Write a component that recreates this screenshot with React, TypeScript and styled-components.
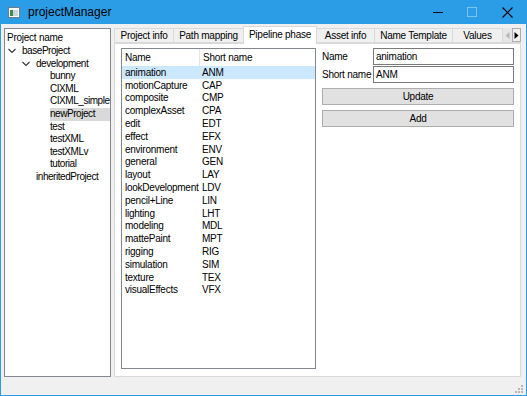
import styled, { createGlobalStyle } from "styled-components";

const phases: [string, string][] = [
  ["animation", "ANM"],
  ["motionCapture", "CAP"],
  ["composite", "CMP"],
  ["complexAsset", "CPA"],
  ["edit", "EDT"],
  ["effect", "EFX"],
  ["environment", "ENV"],
  ["general", "GEN"],
  ["layout", "LAY"],
  ["lookDevelopment", "LDV"],
  ["pencil+Line", "LIN"],
  ["lighting", "LHT"],
  ["modeling", "MDL"],
  ["mattePaint", "MPT"],
  ["rigging", "RIG"],
  ["simulation", "SIM"],
  ["texture", "TEX"],
  ["visualEffects", "VFX"],
];

const tree: { label: string; depth: number; open?: boolean; selected?: boolean }[] = [
  { label: "baseProject", depth: 0, open: true },
  { label: "development", depth: 1, open: true },
  { label: "bunny", depth: 2 },
  { label: "CIXML", depth: 2 },
  { label: "CIXML_simple", depth: 2 },
  { label: "newProject", depth: 2, selected: true },
  { label: "test", depth: 2 },
  { label: "testXML", depth: 2 },
  { label: "testXMLv", depth: 2 },
  { label: "tutorial", depth: 2 },
  { label: "inheritedProject", depth: 1 },
];

const tabs: { label: string; width: number }[] = [
  { label: "Project info", width: 60 },
  { label: "Path mapping", width: 71 },
  { label: "Pipeline phase", width: 74 },
  { label: "Asset info", width: 59 },
  { label: "Name Template", width: 79 },
  { label: "Values", width: 51 },
];

export default function App() {
  return (
    <>
      <GlobalStyle />
      <Window>
        <TitleBar>
          <AppIcon>
            <svg width="12" height="11" viewBox="0 0 12 11">
              <rect x="0.5" y="0.5" width="11" height="10" fill="#fff" stroke="#6f7b86" />
              <rect x="2" y="3" width="3" height="6" fill="#3b8a4a" />
              <rect x="5" y="3" width="5" height="6" fill="#c9d4dc" />
            </svg>
          </AppIcon>
          <Title>projectManager</Title>
          <Caption>
            <svg width="10" height="10" viewBox="0 0 10 10">
              <line x1="0" y1="5.5" x2="10" y2="5.5" stroke="#000" strokeWidth="1" />
            </svg>
          </Caption>
          <Caption>
            <svg width="10" height="10" viewBox="0 0 10 10">
              <rect x="0.5" y="0.5" width="9" height="9" fill="none" stroke="#7fc3ef" strokeWidth="1" />
            </svg>
          </Caption>
          <Caption>
            <svg width="11" height="11" viewBox="0 0 11 11">
              <path d="M0.5 0.5 L10.5 10.5 M10.5 0.5 L0.5 10.5" stroke="#000" strokeWidth="1.1" />
            </svg>
          </Caption>
        </TitleBar>
        <Body>
          <TreePanel>
            <TreeHeader>Project name</TreeHeader>
            {tree.map((n) => (
              <TreeRow key={n.label} $depth={n.depth}>
                <Chevron>
                  {n.open && (
                    <svg width="8" height="6" viewBox="0 0 8 6">
                      <path d="M0.5 1 L4 4.5 L7.5 1" fill="none" stroke="#333" strokeWidth="1.1" />
                    </svg>
                  )}
                </Chevron>
                <TreeLabel $selected={n.selected}>{n.label}</TreeLabel>
              </TreeRow>
            ))}
          </TreePanel>
          <TabWidget>
            <TabBar>
              {tabs.map((t) => (
                <Tab key={t.label} $w={t.width} $active={t.label === "Pipeline phase"}>
                  {t.label}
                </Tab>
              ))}
              <ScrollButtons>
                <ScrollBtn $disabled>
                  <svg width="5" height="7" viewBox="0 0 5 7">
                    <path d="M4.5 0 L0.5 3.5 L4.5 7 Z" fill="#b5b5b5" />
                  </svg>
                </ScrollBtn>
                <ScrollBtn>
                  <svg width="5" height="7" viewBox="0 0 5 7">
                    <path d="M0.5 0 L4.5 3.5 L0.5 7 Z" fill="#000" />
                  </svg>
                </ScrollBtn>
              </ScrollButtons>
            </TabBar>
            <TabPane>
              <ListBox>
                <ListHeader>
                  <NameCell>Name</NameCell>
                  <HeaderDivider />
                  <ShortCell>Short name</ShortCell>
                </ListHeader>
                {phases.map(([name, short], i) => (
                  <ListRow key={name} $selected={i === 0}>
                    <NameCell>{name}</NameCell>
                    <ShortCell>{short}</ShortCell>
                  </ListRow>
                ))}
              </ListBox>
              <Form>
                <FieldGrid>
                  <FieldLabel>Name</FieldLabel>
                  <Field>animation</Field>
                  <FieldLabel>Short name</FieldLabel>
                  <Field>ANM</Field>
                </FieldGrid>
                <Button>Update</Button>
                <Button>Add</Button>
              </Form>
            </TabPane>
          </TabWidget>
        </Body>
        <StatusBar>
          <Grip>
            <svg width="8" height="8" viewBox="0 0 8 8">
              {[
                [6, 0], [6, 3], [3, 3], [6, 6], [3, 6], [0, 6],
              ].map(([x, y]) => (
                <rect key={`${x}-${y}`} x={x} y={y} width="2" height="2" fill="#b8b8b8" />
              ))}
            </svg>
          </Grip>
        </StatusBar>
      </Window>
    </>
  );
}

const GlobalStyle = createGlobalStyle`
  html, body {
    margin: 0;
    padding: 0;
    background: #ffffff;
  }
  body {
    font-family: "Liberation Sans", Arial, sans-serif;
  }
`;

const Window = styled.div`
  width: 527px;
  height: 396px;
  box-sizing: border-box;
  display: flex;
  flex-direction: column;
  background: #f0f0f0;
  border: 1px solid #2b9ce6;
  border-top: none;
  font-family: "Liberation Sans", Arial, sans-serif;
  font-size: 10px;
  letter-spacing: -0.25px;
  color: #000;
  overflow: hidden;
`;

const TitleBar = styled.div`
  height: 24px;
  flex-shrink: 0;
  display: flex;
  align-items: center;
  background: #2b9ce6;
  margin: 0 -1px;
  padding-left: 8px;
  letter-spacing: 0;
`;

const AppIcon = styled.div`
  display: flex;
  width: 12px;
  height: 11px;
  margin-top: 1px;
`;

const Title = styled.div`
  flex: 1;
  margin-left: 8px;
  font-size: 12px;
  color: #000;
`;

const Caption = styled.div`
  width: 34px;
  height: 24px;
  display: flex;
  align-items: center;
  justify-content: center;
  &:last-child {
    width: 36px;
    margin-right: 2px;
  }
`;

const Body = styled.div`
  flex: 1;
  display: flex;
  gap: 3px;
  padding: 2px 5px 0 3px;
  min-height: 0;
`;

const TreePanel = styled.div`
  width: 107px;
  flex-shrink: 0;
  margin-top: 2px;
  height: 349px;
  box-sizing: border-box;
  background: #fff;
  border: 1px solid #828790;
  padding: 1px 0 0 0;
  overflow: hidden;
`;

const TreeHeader = styled.div`
  height: 15px;
  padding-left: 2px;
  line-height: 15px;
`;

const TreeRow = styled.div<{ $depth: number }>`
  display: flex;
  align-items: center;
  height: 12.6px;
  padding-left: ${(p) => 3 + p.$depth * 14}px;
`;

const Chevron = styled.span`
  width: 14px;
  display: flex;
  align-items: center;
  flex-shrink: 0;
`;

const TreeLabel = styled.span<{ $selected?: boolean }>`
  flex: 1;
  height: 12.6px;
  line-height: 12.6px;
  letter-spacing: -0.45px;
  white-space: nowrap;
  background: ${(p) => (p.$selected ? "#d9d9d9" : "transparent")};
`;

const TabWidget = styled.div`
  flex: 1;
  min-width: 0;
  display: flex;
  flex-direction: column;
  height: 351px;
`;

const TabBar = styled.div`
  display: flex;
  align-items: flex-end;
  height: 17px;
  position: relative;
  z-index: 1;
`;

const Tab = styled.div<{ $active?: boolean; $w: number }>`
  box-sizing: border-box;
  width: ${(p) => p.$w}px;
  flex-shrink: 0;
  height: ${(p) => (p.$active ? "18px" : "15px")};
  margin-bottom: ${(p) => (p.$active ? "-1px" : "0")};
  text-align: center;
  line-height: ${(p) => (p.$active ? "16px" : "14px")};
  white-space: nowrap;
  background: ${(p) => (p.$active ? "#fff" : "#f0f0f0")};
  border: 1px solid #d9d9d9;
  border-bottom: ${(p) => (p.$active ? "none" : "1px solid #d9d9d9")};
  & + & {
    margin-left: -1px;
  }
`;

const ScrollButtons = styled.div`
  display: flex;
  height: 15px;
  margin-left: auto;
  border-bottom: 1px solid #d9d9d9;
  box-sizing: border-box;
`;

const ScrollBtn = styled.div<{ $disabled?: boolean }>`
  width: 9px;
  display: flex;
  align-items: center;
  justify-content: center;
  box-sizing: border-box;
  background: ${(p) => (p.$disabled ? "#e6e6e6" : "#f0f0f0")};
  border: ${(p) => (p.$disabled ? "none" : "1px solid #adadad")};
`;

const TabPane = styled.div`
  flex: 1;
  display: flex;
  gap: 6px;
  box-sizing: border-box;
  background: #fff;
  border: 1px solid #d9d9d9;
  padding: 4px 6px 7px 6px;
`;

const ListBox = styled.div`
  width: 195px;
  flex-shrink: 0;
  box-sizing: border-box;
  border: 1px solid #828790;
  overflow: hidden;
`;

const ListHeader = styled.div`
  display: flex;
  align-items: center;
  height: 17px;
  position: relative;
`;

const HeaderDivider = styled.div`
  width: 1px;
  height: 17px;
  background: #e5e5e5;
`;

const ListRow = styled.div<{ $selected?: boolean }>`
  display: flex;
  align-items: center;
  height: 12.8px;
  background: ${(p) => (p.$selected ? "#cce8ff" : "transparent")};
`;

const NameCell = styled.span`
  width: 74px;
  flex-shrink: 0;
  padding-left: 3px;
  white-space: nowrap;
  overflow: hidden;
`;

const ShortCell = styled.span`
  flex: 1;
  padding-left: 3px;
  white-space: nowrap;
`;

const Form = styled.div`
  flex: 1;
  min-width: 0;
  display: flex;
  flex-direction: column;
  gap: 5px;
`;

const FieldGrid = styled.div`
  display: grid;
  grid-template-columns: 51px 1fr;
  row-gap: 1px;
  align-items: center;
`;

const FieldLabel = styled.span`
  white-space: nowrap;
`;

const Field = styled.div`
  height: 17px;
  box-sizing: border-box;
  border: 1px solid #7a7a7a;
  padding-left: 2px;
  line-height: 15px;
`;

const Button = styled.div`
  height: 17px;
  box-sizing: border-box;
  border: 1px solid #adadad;
  background: #e1e1e1;
  text-align: center;
  line-height: 15px;
`;

const StatusBar = styled.div`
  height: 20px;
  flex-shrink: 0;
  display: flex;
  justify-content: flex-end;
  align-items: flex-end;
  padding: 0 3px 2px 0;
  box-sizing: border-box;
`;

const Grip = styled.div`
  display: flex;
  width: 8px;
  height: 8px;
`;
